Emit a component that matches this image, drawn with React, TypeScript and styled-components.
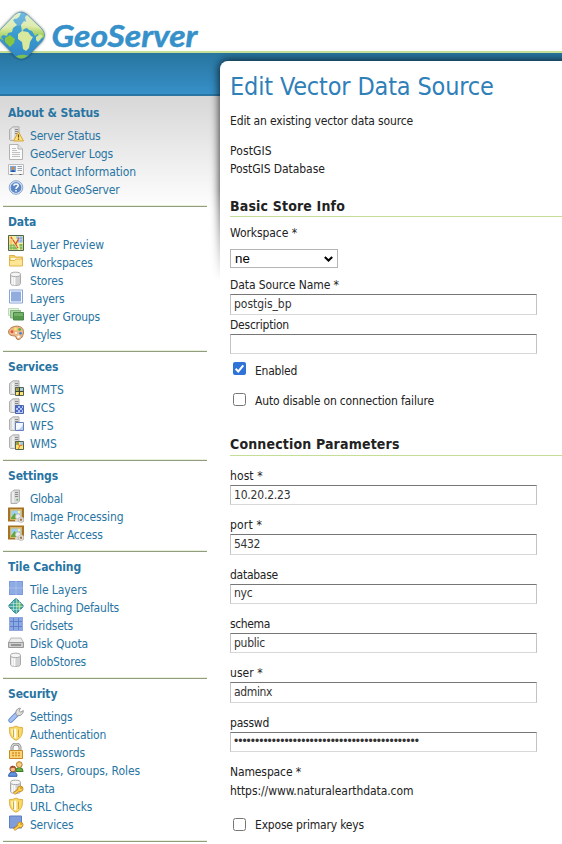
import React from 'react';
import styled, { createGlobalStyle } from 'styled-components';

const GlobalStyle = createGlobalStyle`
  * { box-sizing: border-box; }
  html, body { margin: 0; padding: 0; background: #fff; }
  body {
    overflow: hidden;
    color: #222;
    font: 12px/18px "DejaVu Sans Condensed", Tahoma, sans-serif;
    font-stretch: condensed;
  }
`;

const Page = styled.div`
  width: 562px;
  height: 844px;
  overflow: hidden;
`;

const Header = styled.header`
  height: 96px;
  display: flex;
  flex-direction: column;
`;

const Brand = styled.div`
  height: 51px;
  flex: none;
`;

const Logo = styled.svg`
  display: block;
  position: relative;
  z-index: 2;
  overflow: visible;
`;

const Banner = styled.div`
  flex: 1;
  border-top: 2px solid #c5de95;
  border-bottom: 2px solid #2a74a3;
  background: linear-gradient(#28759f, #3690c8);
`;

const Body = styled.div`
  display: flex;
  height: 748px;
  background: linear-gradient(#d7d7d7, #fff 114px);
`;

const Sidebar = styled.nav`
  flex: none;
  width: 220px;
  padding: 2px 13px 0 3px;
`;

const Section = styled.section`
  padding: 6px 0 8px 5px;
  border-bottom: 1px solid #919d7f;
  box-shadow: inset 0 -1px #e9f1dc;
`;

const SectionTitle = styled.h3<{ $track: number }>`
  margin: 0 0 4px;
  font-size: 12px;
  line-height: 18px;
  font-weight: bold;
  color: #2874a2;
  letter-spacing: ${(p) => p.$track}px;
`;

const NavItem = styled.a<{ $track: number }>`
  display: flex;
  height: 18px;
  gap: 6px;
  color: #2874a2;
  white-space: nowrap;
  letter-spacing: ${(p) => p.$track}px;
`;

const NavLabel = styled.span`
  padding-top: 1px;
  height: 18px;
`;

const Glyph = styled.svg`
  flex: none;
  width: 16px;
  height: 16px;
`;

const Panel = styled.main`
  position: relative;
  flex: 1;
  min-width: 0;
  height: 783px;
  margin-top: -35px;
  padding: 11px 0 0 10px;
  background: #fff;
  border-top-left-radius: 8px;
`;

const ShadowLayer = styled.div`
  position: relative;
  z-index: 0;
`;

/* The shadow fades out partway down the panel's left edge. */
const PanelShadow = styled.div`
  position: absolute;
  left: -12px;
  top: -43px;
  width: 354px;
  height: 228px;
  overflow: hidden;
  mask-image: linear-gradient(#000 60%, transparent);
  &::before {
    content: '';
    display: block;
    height: 240px;
    margin: 8px -20px 0 12px;
    border-top-left-radius: 8px;
    box-shadow: 0 0 9px 1px rgba(0, 0, 0, 0.75);
  }
`;

const PageTitle = styled.h1`
  margin: 0;
  height: 40px;
  font-size: 25px;
  line-height: 30px;
  font-weight: normal;
  letter-spacing: -0.16px;
  color: #2f7fb9;
  white-space: nowrap;
`;

const Text = styled.p<{ $track?: number; $gap?: number }>`
  margin: 0 0 ${(p) => p.$gap ?? 0}px;
  height: 18px;
  white-space: nowrap;
  letter-spacing: ${(p) => p.$track ?? -0.15}px;
`;

const GroupTitle = styled.h2<{ $top: number; $bottom: number; $height: number }>`
  margin: ${(p) => p.$top}px 0 ${(p) => p.$bottom}px;
  height: ${(p) => p.$height}px;
  border-bottom: 1px solid #c5de95;
  font-size: 14px;
  line-height: 18px;
  font-weight: bold;
  letter-spacing: 0.16px;
`;

const Field = styled.div<{ $gap: number }>`
  margin-bottom: ${(p) => p.$gap}px;
`;

const FieldLabel = styled.label<{ $track?: number }>`
  display: block;
  height: 18px;
  white-space: nowrap;
  letter-spacing: ${(p) => p.$track ?? -0.1}px;
`;

const TextInput = styled.input<{ $track?: number; $height?: number }>`
  display: block;
  width: 307px;
  height: ${(p) => p.$height ?? 20.333}px;
  padding: 0 3px 1px;
  border: 1px solid;
  border-color: #767676 #c3c3c3 #d8d8d8 #c3c3c3;
  border-radius: 0;
  outline: none;
  background: #fff;
  color: #333;
  font: 12px "DejaVu Sans Condensed", Tahoma, sans-serif;
  font-stretch: condensed;
  letter-spacing: ${(p) => p.$track ?? -0.2}px;
  &[type='password'] {
    font-family: "Liberation Sans", Arial, sans-serif;
    font-stretch: normal;
  }
`;

const SelectBox = styled.div`
  display: flex;
  align-items: center;
  justify-content: space-between;
  width: 108px;
  height: 19px;
  margin: 7px 0 8px;
  padding: 0 4px;
  border: 1px solid #b5b5b5;
  color: #000;
  font: 13.333px/17px "Liberation Sans", Arial, sans-serif;
`;

const CheckRow = styled.label<{ $gap: number; $track: number }>`
  display: flex;
  gap: 9px;
  height: 18px;
  margin-bottom: ${(p) => p.$gap}px;
  padding-left: 3px;
  white-space: nowrap;
  letter-spacing: ${(p) => p.$track}px;
`;

const CheckText = styled.span`
  padding-top: 1px;
`;

const CheckMark = styled.svg<{ $drop: number }>`
  width: 13px;
  height: 13px;
  margin-top: ${(p) => p.$drop}px;
`;

/* ---------- icons ---------- */

const Tower = ({ small }: { small?: boolean }) => (
  <g>
    <path d={small ? 'M3 3.5 6 1h5.5v11L9 14.5H3z' : 'M1.5 3.5 5 .8h6v11L9 14.5H2.5l-1-1z'} fill="#d9d9d9" stroke="#a8a8a8" strokeWidth=".9" />
    <path d="M5 2.6v11" stroke="#f6f6f6" strokeWidth="1.5" />
    <path d="M7 3.5h3.200M7 5.500h3.200M7 7.500h3.200" stroke="#8a8a8a" />
    {small && <path d="M8.5 10h1.5v1.5H8.5z" fill="#56a84b" />}
  </g>
);

const Cylinder = () => (
  <g>
    <path d="M2.5 3.5v9c0 1.2 2 2 5 2s5-.8 5-2v-9" fill="#e2e2e2" stroke="#a8a8a8" />
    <path d="M4.3 5v8.6M6.3 5.6v8.8" stroke="#fff" />
    <path d="M9 6v8M11 5.5V13" stroke="#c2c2c2" />
    <ellipse cx="7.5" cy="3.4" rx="5" ry="2.2" fill="#f5f5f5" stroke="#a8a8a8" />
  </g>
);

const Key = () => (
  <g>
    <path d="m11.5 10.5-5.5 4" stroke="#b5791b" strokeWidth="3.2" />
    <circle cx="12.3" cy="9.8" r="2.7" fill="#ffd54c" stroke="#c58a27" />
    <path d="m11 11-4.6 3.5" stroke="#ffcf49" strokeWidth="1.6" />
    <circle cx="13" cy="9" r=".8" fill="#a86d13" />
  </g>
);

const MapTile = () => (
  <g>
    <path d="M7.5 7.5h8v8h-8z" fill="#f8e86e" stroke="#536453" />
    <path d="M8 8h3v3H8z" fill="#86b94f" />
    <path d="M12 8h3v3h-3z" fill="#a8cbe8" />
    <path d="m9 8 2.5 4 3-1M11.5 12l-1 3" stroke="#e26834" fill="none" />
  </g>
);

const Shield = () => (
  <g>
    <path d="M1.5 2.5Q5 3 8 1q3 2 6.500 1.500C15 8.500 13.500 13 8 15.300 2.500 13 1 8.500 1.500 2.500z" fill="#f6d560" stroke="#dfb348" />
    <path d="M3.200 4.200Q5.800 4.400 8 3v10.700C4.200 12 3 8.500 3.200 4.200z" fill="#fdf3b8" />
    <path d="M8 3q2.200 1.400 4.800 1.200C13 8.500 11.800 12 8 13.700z" fill="#f8dc72" />
    <path d="M5.500 4.500v7.500M10.500 4.500v7.500" stroke="#c9932a" strokeWidth=".8" />
    <path d="M7.500 4v9" stroke="#fff" strokeWidth="1.500" />
  </g>
);

const Picture = () => (
  <g>
    <path d="M1 1.500h14v12H1z" fill="#fff4cd" stroke="#a87224" strokeWidth="2" />
    <path d="M2.500 3h11v9h-11z" fill="#9fd0f2" stroke="#e0b558" />
    <path d="m3 11 3.500-5 3 3.500L12 8v4H3z" fill="#61a83a" />
    <circle cx="11" cy="5" r="1.200" fill="#fff2a0" />
    <circle cx="10" cy="9.500" r="2.600" fill="#eee" stroke="#bbb" strokeWidth=".8" />
    <circle cx="13" cy="12.700" r="2.800" fill="#e4e4e4" stroke="#bbb" strokeWidth=".8" />
    <circle cx="13" cy="12.700" r="1.200" fill="#a87743" />
    <circle cx="8.500" cy="13.500" r="1.500" fill="#ddd" />
  </g>
);

const glyphs: Record<string, React.ReactNode> = {
  status: (
    <g>
      <Tower />
      <path d="m10.500 5.800 5 9.200h-10z" fill="#ffe07a" stroke="#d6a53c" strokeLinejoin="round" />
      <path d="M10.500 8.500v3M10.500 12.500v1.300" stroke="#6a4a0c" strokeWidth="1.200" />
    </g>
  ),
  page: (
    <g>
      <path d="M1.500.5H10L14.500 5v10.500h-13z" fill="#fafafa" stroke="#b2b2b2" />
      <path d="M10 .5V5h4.500" fill="#e4e4e4" stroke="#b2b2b2" />
      <path d="M4 4.500h4M4 6.500h5M4 8.500h8M4 10.500h8M4 12.500h8" stroke="#c0c0c0" />
    </g>
  ),
  card: (
    <g>
      <path d="M.5 2.500h15v10H.5z" fill="#f7f7f7" stroke="#bcbcbc" />
      <path d="M2 4h6v6H2z" fill="#78a9e4" />
      <circle cx="5" cy="6.200" r="1.600" fill="#c88946" />
      <path d="M2.800 10q0-2 2.200-2t2.200 2z" fill="#2d559d" />
      <path d="M9.500 4.500H14M9.500 6.500H14M9.500 8.500H14" stroke="#9aa5b4" />
      <path d="M2.500 12.500h2M11.500 12.500h2" stroke="#666" />
    </g>
  ),
  help: (
    <g>
      <circle cx="8" cy="7.500" r="6.800" fill="#dde7f6" stroke="#8ca6cf" />
      <circle cx="8" cy="7.500" r="5.400" fill="#5c87c7" />
      <path d="M5.900 5.800C6 3.500 10.200 3.500 10.200 5.800 10.200 7.200 8 7.200 8 8.900M8 10v1.400" stroke="#fff" strokeWidth="1.500" fill="none" />
    </g>
  ),
  preview: (
    <g>
      <path d="M.5.5h15v15H.5z" fill="#f3ee9a" stroke="#4e6350" />
      <path d="M1.500 1.500h3v9h-3z" fill="#f7c968" />
      <path d="M8 1.500h6.500v6H10z" fill="#8fb2e8" />
      <path d="M1.500 10 6 9l4 5.500H1.500zM11 9h3.500v5.500H12z" fill="#85b957" />
      <path d="m3 2 4 6 3 5M11 3 7.500 9.500" stroke="#dd4b25" strokeWidth="1.300" fill="none" />
      <path d="M4.500 1v14M11.500 1v14M1 4.500h14M1 11.500h14" stroke="#fff" strokeOpacity=".4" strokeWidth=".6" />
    </g>
  ),
  folder: (
    <g>
      <path d="M1.500 3.500v-1h5l1 1.500h7v8h-13z" fill="#f6ce68" stroke="#dfae49" />
      <path d="M3 5h10v3H3z" fill="#fff9d9" />
      <path d="M1.500 7.500h5L8 6h6.500v7h-13z" fill="#fde694" stroke="#e3b352" />
    </g>
  ),
  cylinder: <Cylinder />,
  layer: (
    <g>
      <path d="M1.500 1h13v13h-13z" fill="#fff" stroke="#88a2d7" />
      <path d="M3 2.500h10v10H3z" fill="#91ade0" />
    </g>
  ),
  group: (
    <g>
      <path d="M.5 1.500h10v7H.5z" fill="#e2f0dd" stroke="#bedab6" />
      <path d="M2.500 3.500h10v7.500h-10z" fill="#a4cf9b" stroke="#82b87a" />
      <path d="M5.500 5.500h10v7.500h-10z" fill="#559a4c" stroke="#4b8a4a" />
      <path d="M6 6h9v3H6z" fill="#75b268" />
    </g>
  ),
  palette: (
    <g>
      <path d="M8 1.200C13 .8 15.500 3.500 15.500 6.500c0 4-2 8-5.500 8-2.500 0-1.200-2.800-3-3.400C5 10.600.8 11 .6 7 .5 4 4 1.500 8 1.200z" fill="#ecb885" stroke="#b57a4c" />
      <circle cx="4" cy="6.700" r="1.400" fill="#e94b36" />
      <circle cx="7.500" cy="4" r="1.400" fill="#f8ea68" />
      <circle cx="11.700" cy="4.500" r="1.400" fill="#59b64c" />
      <circle cx="12.500" cy="8.300" r="1.400" fill="#4a83d2" />
      <circle cx="10.500" cy="11.700" r="1.300" fill="#fff" />
      <circle cx="8" cy="8" r="1" fill="#fff" />
    </g>
  ),
  wmts: (
    <g>
      <Tower />
      <MapTile />
      <path d="M11.500 7.500v8M7.500 11.500h8" stroke="#354335" />
    </g>
  ),
  wcs: (
    <g>
      <Tower />
      <path d="M7.500 7.500h8v8h-8z" fill="#b3c6f6" stroke="#4965a8" />
      <path d="M8 8h2v2H8zM12 8h2v2h-2zM10 10h2v2h-2zM14 10h1.500v2H14zM8 12h2v2H8zM12 12h2v2h-2z" fill="#4a68c4" />
    </g>
  ),
  wfs: (
    <g>
      <Tower />
      <path d="M7.500 6.500h8v8h-8z" fill="#f4f8ff" stroke="#6581bb" />
      <path d="M15 8v6H8q6-1 7-6z" fill="#b5ccf1" />
    </g>
  ),
  wms: (
    <g>
      <Tower />
      <MapTile />
    </g>
  ),
  server: <Tower small />,
  picture: <Picture />,
  tiles: (
    <g>
      <path d="M1 1h14v14H1z" fill="#7c9bdd" />
      <path d="M2 2h5v5H2zM9 2h5v5H9zM2 9h5v5H2zM9 9h5v5H9z" fill="#8fabe3" />
      <path d="M8 1v14M1 8h14" stroke="#b5c7ee" />
    </g>
  ),
  globe: (
    <g>
      <path d="M8 .7Q9 .7 11.500 3.500L14.800 7Q15.600 8 14.800 9L11.500 12.500Q9 15.300 8 15.300T4.500 12.500L1.200 9Q.4 8 1.200 7L4.500 3.500Q7 .7 8 .7z" fill="#45a6a2" stroke="#2f8794" />
      <path d="M9 2.500 14 7.500 11 12 9 9z" fill="#77bf6c" />
      <path d="M5.500 3v10M8.500 1v14M11.500 3v10M2.500 5.500h11M1 8.500h14M3 11.500h10" stroke="#d8f3ec" strokeOpacity=".75" strokeWidth=".7" />
    </g>
  ),
  grid: (
    <g>
      <path d="M1 1h14v14H1z" fill="#8aa7e3" />
      <path d="M5.500 1v14M10.500 1v14M1 5.500h14M1 10.500h14" stroke="#5e80ca" />
      <path d="M1.500 1.500h13v13h-13z" fill="none" stroke="#8fa9df" />
    </g>
  ),
  disk: (
    <g>
      <path d="M3 4h10l2.500 4.500h-15z" fill="#ededed" stroke="#b8b8b8" />
      <path d="M.5 8.500h15v5H.5z" fill="#cfcfcf" stroke="#999" />
      <path d="M3 11h10" stroke="#808080" strokeWidth="1.500" />
    </g>
  ),
  wrench: (
    <g>
      <path d="m2.800 13.300 6-6" stroke="#6a8fd0" strokeWidth="5" strokeLinecap="round" />
      <path d="m2.800 13.300 6-6" stroke="#a9c4f4" strokeWidth="3" strokeLinecap="round" />
      <path d="M8 7.500C7 4 9.500.8 12.500 1.300L11 3.500 12.800 5.200 15.300 3.500C15.500 6.500 13 9 9.600 8.600z" fill="#dedede" stroke="#929292" />
    </g>
  ),
  shield: <Shield />,
  lock: (
    <g>
      <path d="M4 8V4.500a4 3.500 0 0 1 8 0V8" fill="none" stroke="#8d8d8d" strokeWidth="3" />
      <path d="M4 8V4.500a4 3.500 0 0 1 8 0V8" fill="none" stroke="#ddd" strokeWidth="1.200" />
      <path d="M1.500 7.500h13v8h-13z" fill="#fbd476" stroke="#c78a25" />
      <path d="M4 10h2M4 12.500h2M7 10h2M7 12.500h2M10 10h2M10 12.500h2" stroke="#d8932d" strokeWidth="1.500" />
    </g>
  ),
  users: (
    <g>
      <path d="M7.500 10.500q0-4 3.800-4t3.800 4z" fill="#67ad42" stroke="#397c28" />
      <circle cx="11.300" cy="3.600" r="2.900" fill="#f5cc83" stroke="#b97b2b" />
      <path d="M8.500 3q2-3 5.500-.6L12.500 1q-2-1.500-4 1z" fill="#d69a35" />
      <path d="M.6 15.300q0-4.300 4.200-4.300t4.200 4.300z" fill="#5f94de" stroke="#315fae" />
      <circle cx="4.800" cy="8" r="2.900" fill="#f3bd8c" stroke="#99532f" />
      <path d="M1.900 7.500Q2.500 4.500 5 5q3 .2 2.900 3L5.500 6.800z" fill="#a5562f" />
    </g>
  ),
  datakey: (
    <g>
      <Cylinder />
      <Key />
    </g>
  ),
  layerkey: (
    <g>
      <path d="M1.500 1h12v12h-12z" fill="#7f9ddb" stroke="#5f7fc4" />
      <Key />
    </g>
  ),
};

/* ---------- navigation data: [icon, label, tracking] ---------- */

type Entry = [string, string, number];

const sections: { title: string; track: number; items: Entry[] }[] = [
  {
    title: 'About & Status',
    track: -0.1,
    items: [
      ['status', 'Server Status', -0.21],
      ['page', 'GeoServer Logs', -0.17],
      ['card', 'Contact Information', -0.1],
      ['help', 'About GeoServer', -0.19],
    ],
  },
  {
    title: 'Data',
    track: -0.1,
    items: [
      ['preview', 'Layer Preview', -0.12],
      ['folder', 'Workspaces', -0.19],
      ['cylinder', 'Stores', -0.14],
      ['layer', 'Layers', -0.24],
      ['group', 'Layer Groups', -0.17],
      ['palette', 'Styles', -0.29],
    ],
  },
  {
    title: 'Services',
    track: -0.12,
    items: [
      ['wmts', 'WMTS', 0.14],
      ['wcs', 'WCS', 0],
      ['wfs', 'WFS', 0.06],
      ['wms', 'WMS', 0.05],
    ],
  },
  {
    title: 'Settings',
    track: -0.12,
    items: [
      ['server', 'Global', -0.29],
      ['picture', 'Image Processing', -0.08],
      ['picture', 'Raster Access', -0.19],
    ],
  },
  {
    title: 'Tile Caching',
    track: -0.1,
    items: [
      ['tiles', 'Tile Layers', -0.09],
      ['globe', 'Caching Defaults', -0.2],
      ['grid', 'Gridsets', -0.22],
      ['disk', 'Disk Quota', -0.14],
      ['cylinder', 'BlobStores', -0.2],
    ],
  },
  {
    title: 'Security',
    track: -0.14,
    items: [
      ['wrench', 'Settings', -0.25],
      ['shield', 'Authentication', -0.23],
      ['lock', 'Passwords', -0.11],
      ['users', 'Users, Groups, Roles', -0.06],
      ['datakey', 'Data', -0.27],
      ['shield', 'URL Checks', -0.14],
      ['layerkey', 'Services', -0.28],
    ],
  },
];

const params = [
  { label: 'host *', track: 0.1, value: '10.20.2.23', valueTrack: -0.19 },
  { label: 'port *', track: 0.18, value: '5432', valueTrack: -0.37 },
  { label: 'database', track: -0.26, value: 'nyc', valueTrack: -0.29 },
  { label: 'schema', track: -0.36, value: 'public', valueTrack: -0.25 },
  { label: 'user *', track: 0.05, value: 'adminx', valueTrack: -0.37 },
  { label: 'passwd', track: -0.23, value: 'x'.repeat(44), valueTrack: 0, secret: true },
];

function GeoServerLogo() {
  return (
    <Logo width="210" height="62" viewBox="0 0 210 62">
      <defs>
        <linearGradient id="sea" x1="0" y1="0" x2="0" y2="1">
          <stop offset="0" stopColor="#5aaedb" />
          <stop offset="0.5" stopColor="#3a9ad0" />
          <stop offset="1" stopColor="#2f84c4" />
        </linearGradient>
        <linearGradient id="land" x1="0" y1="0" x2="0" y2="1">
          <stop offset="0" stopColor="#d9edc9" />
          <stop offset="0.55" stopColor="#d9e8a0" />
          <stop offset="1" stopColor="#86c440" />
        </linearGradient>
        <filter id="soft" x="-30%" y="-30%" width="160%" height="160%">
          <feGaussianBlur stdDeviation="1.4" />
        </filter>
        <clipPath id="gem">
          <path d="M15 14.500Q21 9.500 27 14.500L42 29Q47 35 42 41.500L28 56Q21 61.500 15 56L1 41.500Q-5 35 1 29z" />
        </clipPath>
      </defs>
      <path d="M15 14.500Q21 9.500 27 14.500L42 29Q47 35 42 41.500L28 56Q21 61.500 15 56L1 41.500Q-5 35 1 29z" fill="#000" opacity=".6" filter="url(#soft)" />
      <g clipPath="url(#gem)">
        <path d="M-5 8h55v54H-5z" fill="url(#sea)" />
        <path d="M-3 30 8 19l5-5 3 1 0 3-3 2 2 3 2 2-4 3-1 4-4 1-1 3-4-1-2 2 3 4-5-3z" fill="url(#land)" />
        <path d="m5 38 5-3 5 4-1 4-4 4-5-5z" fill="#8ac53f" />
        <path d="m13 16 5-4 3 1-2 4-3 2zM21 25l3-4 2 1-1-5 3-3 8 7 8 9 1 7-5 2-2-5-3 2-3-5-3-1-2-2-3 1-2 3z" fill="url(#land)" />
        <path d="m18 34 4-3 6 1 3 4 2 1-3 5-1 6-3 3-3-2-1-7-4-3z" fill="#d8e89c" />
        <path d="m36 37 4-3 3 2-3 4-2 2-2-2z" fill="#cfe5a2" />
        <path d="M14 57q8-4 15-1l-7 6z" fill="#7cc04e" />
        <path d="M0 30 15 15q6-5 12 0l15 15Q24 21 0 30z" fill="#fff" opacity=".16" />
      </g>
      <path d="M15 14.500Q21 9.500 27 14.500L42 29Q47 35 42 41.500L28 56Q21 61.500 15 56L1 41.500Q-5 35 1 29z" fill="none" stroke="#3583af" strokeOpacity=".45" />
      <text x="51.500" y="46.500" textLength="146" lengthAdjust="spacingAndGlyphs" fill="#3690c9" stroke="#3690c9" strokeWidth=".5" fontFamily="Lato, 'Open Sans', sans-serif" fontSize="31" fontWeight="700" fontStyle="italic" fontStretch="normal">
        GeoServer
      </text>
    </Logo>
  );
}

function Checkbox({ checked, drop = 1 }: { checked?: boolean; drop?: number }) {
  return (
    <CheckMark viewBox="0 0 13 13" $drop={drop}>
      {checked ? (
        <>
          <rect width="13" height="13" rx="2" fill="#2f73d8" />
          <path d="m2.600 6.700 2.700 2.700 5-6" fill="none" stroke="#fff" strokeWidth="2" />
        </>
      ) : (
        <rect x=".5" y=".5" width="12" height="12" rx="2" fill="#fff" stroke="#767676" />
      )}
    </CheckMark>
  );
}

export default function App() {
  return (
    <Page>
      <GlobalStyle />
      <Header>
        <Brand>
          <GeoServerLogo />
        </Brand>
        <Banner />
      </Header>
      <Body>
        <Sidebar>
          {sections.map((s) => (
            <Section key={s.title}>
              <SectionTitle $track={s.track}>{s.title}</SectionTitle>
              {s.items.map(([icon, label, track]) => (
                <NavItem key={label} $track={track}>
                  <Glyph viewBox="0 0 16 16">{glyphs[icon]}</Glyph>
                  <NavLabel>{label}</NavLabel>
                </NavItem>
              ))}
            </Section>
          ))}
        </Sidebar>
        <ShadowLayer>
          <PanelShadow />
        </ShadowLayer>
        <Panel>
          <PageTitle>Edit Vector Data Source</PageTitle>
          <Text $gap={12}>Edit an existing vector data source</Text>
          <Text $track={0.11}>PostGIS</Text>
          <Text $track={-0.07}>PostGIS Database</Text>
          <GroupTitle $top={19} $bottom={7} $height={20}>Basic Store Info</GroupTitle>
          <Text $track={-0.07}>Workspace *</Text>
          <SelectBox>
            ne
            <svg width="9" height="6" viewBox="0 0 9 6">
              <path d="m.8 1 3.700 3.500L8.200 1" fill="none" stroke="#000" strokeWidth="2" />
            </svg>
          </SelectBox>
          <Field $gap={1}>
            <FieldLabel $track={-0.08}>Data Source Name *</FieldLabel>
            <TextInput $height={21} $track={-0.04} defaultValue="postgis_bp" />
          </Field>
          <Field $gap={7}>
            <FieldLabel $track={-0.23}>Description</FieldLabel>
            <TextInput $height={20} />
          </Field>
          <CheckRow $gap={12} $track={-0.23}>
            <Checkbox checked />
            <CheckText>Enabled</CheckText>
          </CheckRow>
          <CheckRow $gap={26} $track={-0.16}>
            <Checkbox drop={2} />
            <CheckText>Auto disable on connection failure</CheckText>
          </CheckRow>
          <GroupTitle $top={0} $bottom={11} $height={21}>Connection Parameters</GroupTitle>
          {params.map((p) => (
            <Field key={p.label} $gap={11}>
              <FieldLabel $track={p.track}>{p.label}</FieldLabel>
              <TextInput type={p.secret ? 'password' : 'text'} defaultValue={p.value} $track={p.valueTrack} />
            </Field>
          ))}
          <Text $track={-0.12} $gap={1}>Namespace *</Text>
          <Text $track={-0.07} $gap={15}>https://www.naturalearthdata.com</Text>
          <CheckRow $gap={0} $track={-0.19}>
            <Checkbox drop={3} />
            <CheckText>Expose primary keys</CheckText>
          </CheckRow>
        </Panel>
      </Body>
    </Page>
  );
}
